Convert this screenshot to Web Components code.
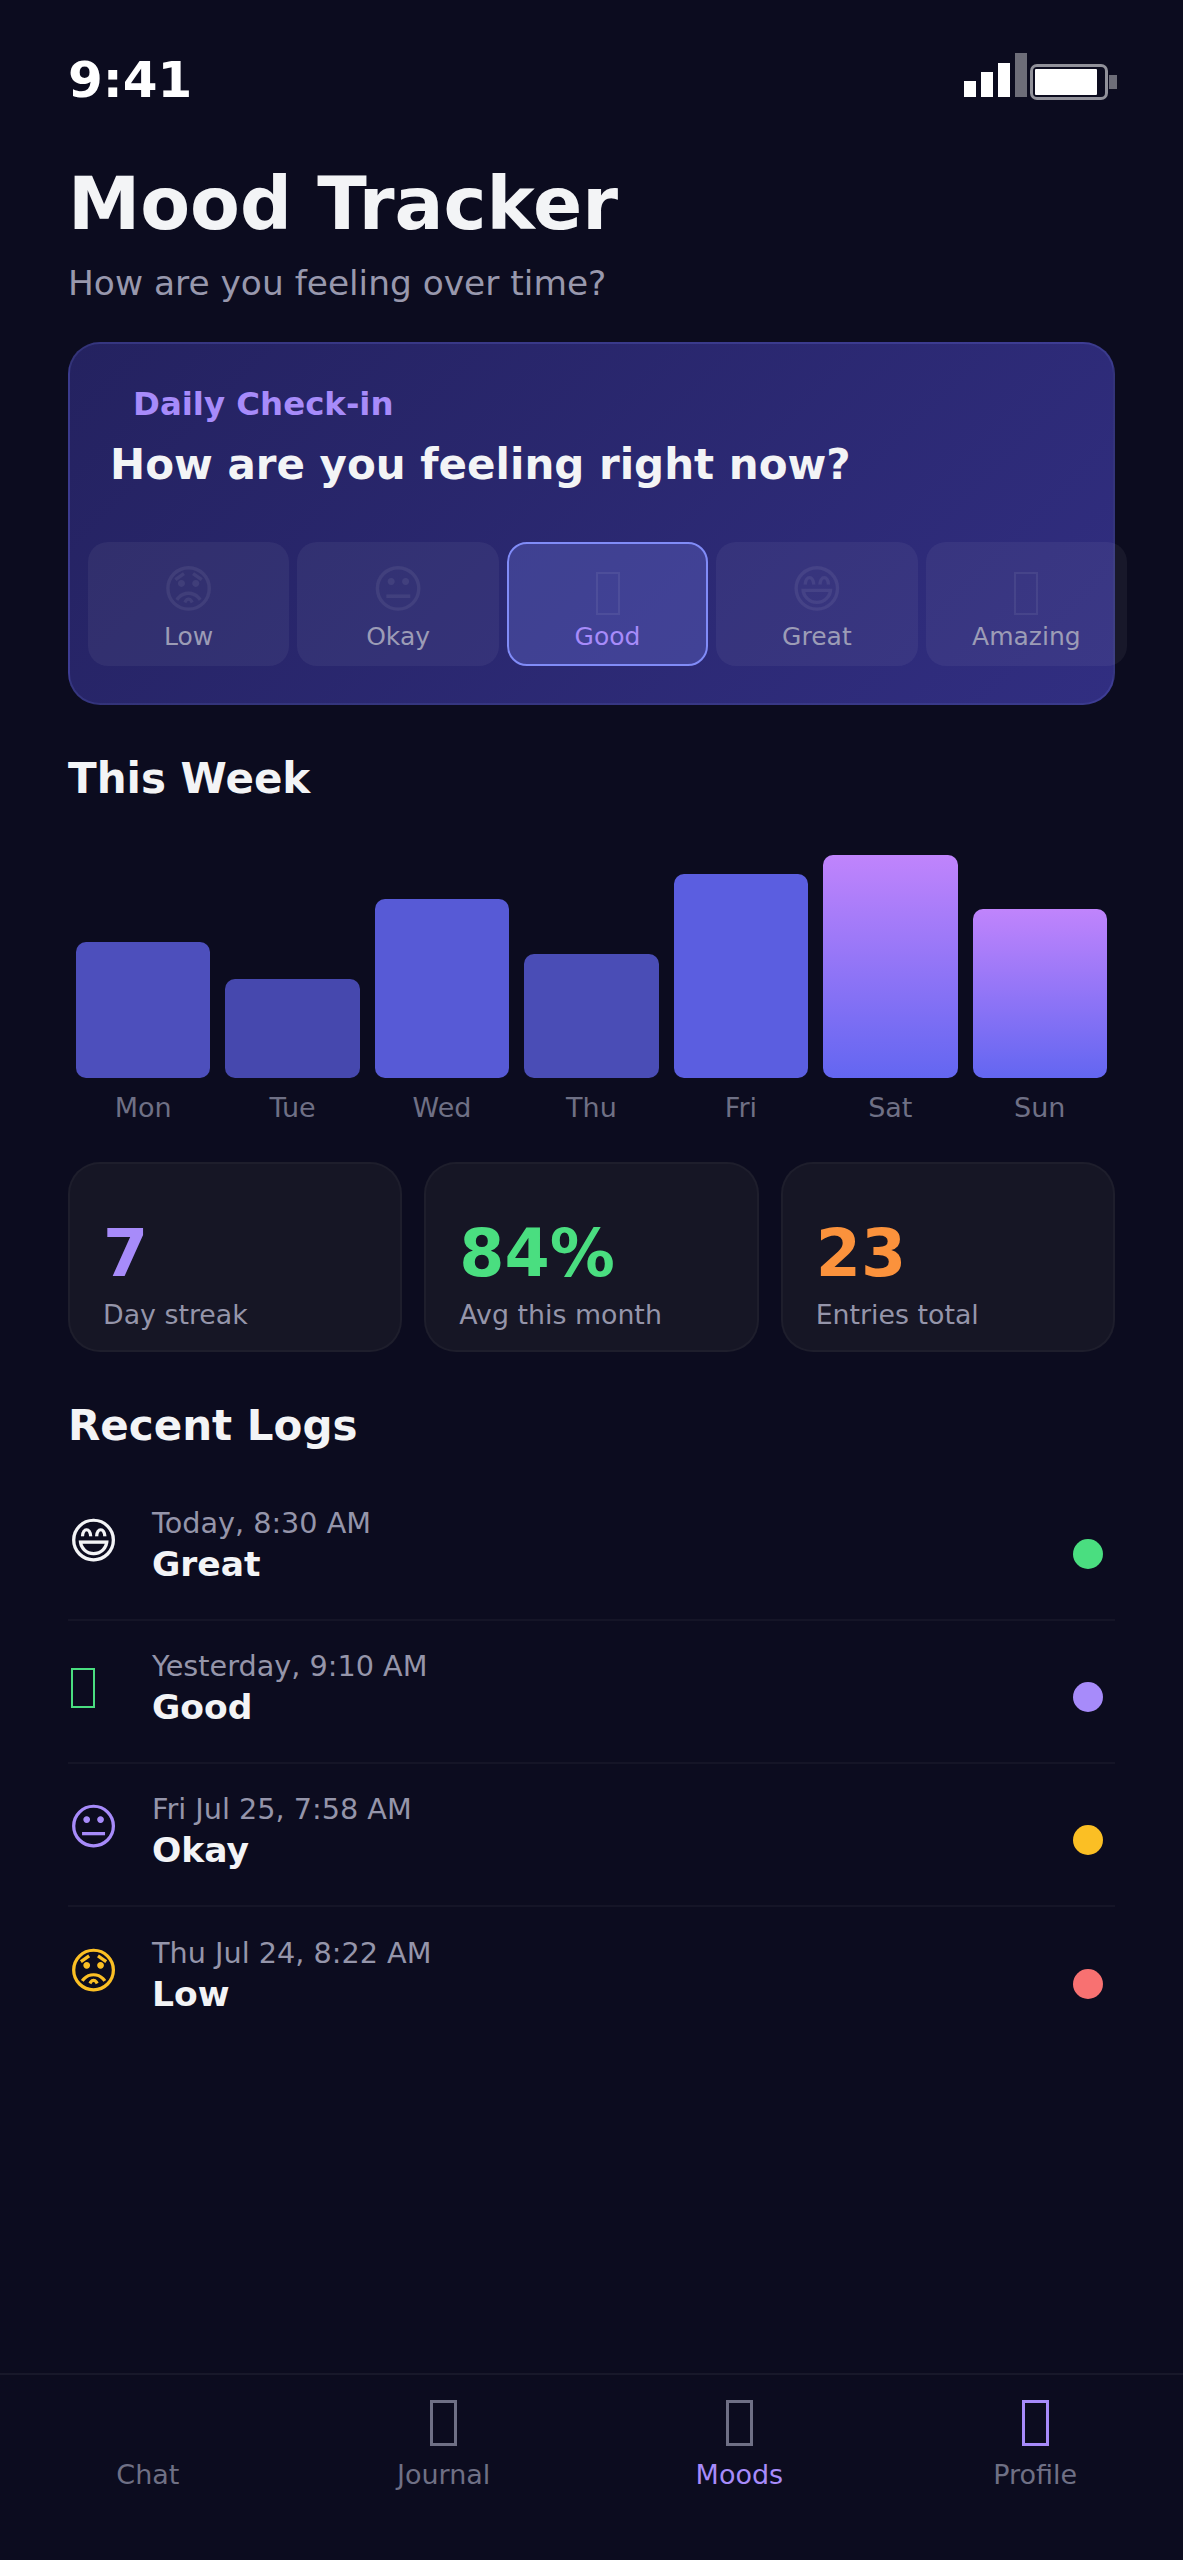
<!DOCTYPE html>
<html lang="en"><head><meta charset="utf-8"><title>Mood Tracker</title>
<style>
html,body{margin:0;padding:0;background:#0c0c1f;color:#f3f4f6;font-family:"DejaVu Sans",sans-serif}
</style></head><body>
<mood-app>
  <status-bar time="9:41"></status-bar>
  <page-header heading="Mood Tracker" sub="How are you feeling over time?"></page-header>
  <checkin-card eyebrow="Daily Check-in" question="How are you feeling right now?">
    <mood-option glyph="😟" label="Low"></mood-option>
    <mood-option glyph="😐" label="Okay"></mood-option>
    <mood-option box label="Good" selected></mood-option>
    <mood-option glyph="😄" label="Great"></mood-option>
    <mood-option box label="Amazing"></mood-option>
  </checkin-card>
  <section-title style="margin-top:47px">This Week</section-title>
  <week-chart>
    <chart-bar h="136" o=".75" label="Mon"></chart-bar>
    <chart-bar h="99" o=".68" label="Tue"></chart-bar>
    <chart-bar h="179" o=".87" label="Wed"></chart-bar>
    <chart-bar h="124" o=".72" label="Thu"></chart-bar>
    <chart-bar h="204" o=".92" label="Fri"></chart-bar>
    <chart-bar h="223" hot label="Sat"></chart-bar>
    <chart-bar h="169" hot label="Sun"></chart-bar>
  </week-chart>
  <stat-row>
    <stat-card value="7" color="#a78bfa" label="Day streak"></stat-card>
    <stat-card value="84%" color="#4ade80" label="Avg this month"></stat-card>
    <stat-card value="23" color="#fb923c" label="Entries total"></stat-card>
  </stat-row>
  <section-title style="margin-top:47px">Recent Logs</section-title>
  <log-list>
    <log-row glyph="😄" color="#f3f4f6" when="Today, 8:30 AM" mood="Great" dot="#4ade80"></log-row>
    <log-row box color="#4ade80" when="Yesterday, 9:10 AM" mood="Good" dot="#a78bfa"></log-row>
    <log-row glyph="😐" color="#a78bfa" when="Fri Jul 25, 7:58 AM" mood="Okay" dot="#fbbf24"></log-row>
    <log-row glyph="😟" color="#fbbf24" when="Thu Jul 24, 8:22 AM" mood="Low" dot="#f87171" last></log-row>
  </log-list>
  <bottom-nav>
    <nav-item label="Chat"></nav-item>
    <nav-item box label="Journal"></nav-item>
    <nav-item box label="Moods" active></nav-item>
    <nav-item box label="Profile" boxactive></nav-item>
  </bottom-nav>
</mood-app>
<script>
function reg(name, css, html){
  customElements.define(name, class extends HTMLElement{
    connectedCallback(){
      if(this.shadowRoot) return;
      const a=n=>{const v=this.getAttribute(n);return v===null?'':v};
      const r=this.attachShadow({mode:'open'});
      r.innerHTML='<style>'+css(this,a)+'</style>'+html(a,this);
    }
  });
}
reg('mood-app',()=>`:host{display:flex;flex-direction:column;min-height:2560px;box-sizing:border-box;padding:0 68px;background:#0c0c1f}`,()=>`<slot></slot>`);
reg('status-bar',()=>`:host{display:flex;justify-content:space-between;align-items:flex-start;height:151px;box-sizing:border-box;padding-top:50px}
.t{font-size:50px;font-weight:700;line-height:60px;color:#fff}
.s{display:flex;align-items:flex-end;gap:5px;margin-top:3px;margin-right:-2px;margin-left:auto}
.b{width:12px;background:#fff}.b.off{opacity:.4}
.bat{box-sizing:border-box;width:78px;height:36px;border:3px solid rgba(255,255,255,.55);border-radius:7px;padding:2px;margin-left:-2px;margin-bottom:-3px;display:flex}
.fill{width:62px;background:#fff;border-radius:1px}
.cap{width:8px;height:14px;background:rgba(255,255,255,.4);margin-left:-4px;margin-bottom:8px}`,
a=>`<div class="t">${a('time')}</div><div class="s"><div class="b" style="height:16px"></div><div class="b" style="height:25px"></div><div class="b" style="height:34px"></div><div class="b off" style="height:44px"></div><div class="bat"><div class="fill"></div></div><div class="cap"></div></div>`);
reg('page-header',()=>`:host{display:block}
h1{margin:0;font-size:72.6px;font-weight:700;line-height:90px;color:#f3f4f6;padding-top:8px}
p{margin:0;font-size:34.4px;line-height:54px;color:#9898ad;margin-top:7px}`,
a=>`<h1>${a('heading')}</h1><p>${a('sub')}</p>`);
reg('checkin-card',()=>`:host{display:block;box-sizing:border-box;height:363px;margin-top:32px;border:2px solid rgba(129,140,248,.16);border-radius:32px;background:linear-gradient(135deg,#242260,#312e81);padding-top:40px}
.e{font-size:32.4px;font-weight:700;line-height:40px;color:#a78bfa;margin-left:63px}
.q{font-size:42px;font-weight:700;line-height:54px;color:#f3f4f6;margin:14px 0 0 40px}
.m{display:flex;gap:8px;margin:50px 0 0 18px;width:1039px}`,
a=>`<div class="e">${a('eyebrow')}</div><div class="q">${a('question')}</div><div class="m"><slot></slot></div>`);
reg('mood-option',(h)=>{const s=h.hasAttribute('selected');return `:host{flex:1 1 0;min-width:0;box-sizing:border-box;height:124px;border-radius:20px;display:flex;flex-direction:column;align-items:center;background:${s?'rgba(129,140,248,.25)':'rgba(255,255,255,.05)'};border:2px solid ${s?'#818cf8':'transparent'}}
.g{height:60px;font-size:51px;line-height:60px;margin-top:16px;color:rgba(255,255,255,.07);display:flex;align-items:center}
.x{box-sizing:border-box;width:24px;height:43px;margin-top:6px;border:2px solid rgba(255,255,255,.07)}
.l{font-size:25px;line-height:30px;margin-top:2px;color:${s?'#a78bfa':'#9c9cb6'}}`},
(a,h)=>`<div class="g">${h.hasAttribute('box')?'<div class="x"></div>':a('glyph')}</div><div class="l">${a('label')}</div>`);
reg('section-title',()=>`:host{display:block;font-size:42px;font-weight:700;line-height:54px;color:#f3f4f6}`,()=>`<slot></slot>`);
reg('week-chart',()=>`:host{display:flex;align-items:flex-end;gap:15px;padding:0 8px;margin-top:49px}`,()=>`<slot></slot>`);
reg('chart-bar',(h,a)=>`:host{flex:1 1 0;min-width:0;display:flex;flex-direction:column;align-items:center}
.b{width:100%;height:${a('h')}px;border-radius:10px;background:${h.hasAttribute('hot')?'linear-gradient(180deg,#c084fc,#6366f1)':'#6366f1'};opacity:${a('o')||1}}
.l{font-size:27px;line-height:34px;margin-top:13px;color:#6f7085}`,
a=>`<div class="b"></div><div class="l">${a('label')}</div>`);
reg('stat-row',()=>`:host{display:flex;gap:22px;margin-top:37px}`,()=>`<slot></slot>`);
reg('stat-card',(h,a)=>`:host{flex:1 1 0;min-width:0;box-sizing:border-box;height:190px;background:#161625;border:2px solid rgba(255,255,255,.035);border-radius:32px;padding:51px 0 0 33px}
.v{font-size:65px;font-weight:700;line-height:78px;color:${a('color')}}
.l{font-size:26.8px;line-height:36px;color:#9595aa;margin-top:4px}`,
a=>`<div class="v">${a('value')}</div><div class="l">${a('label')}</div>`);
reg('log-list',()=>`:host{display:block;margin-top:25px}`,()=>`<slot></slot>`);
reg('log-row',(h,a)=>`:host{display:flex;align-items:center;height:143px;box-sizing:border-box;${h.hasAttribute('last')?'':'border-bottom:2px solid rgba(255,255,255,.04)'}}
.g{width:84px;flex:none;font-size:49px;line-height:60px;height:60px;color:${a('color')};margin-bottom:13px;display:flex;align-items:center}
.x{box-sizing:border-box;width:24px;height:40px;margin:6px 0 0 3px;border:2px solid ${a('color')}}
.c{flex:1;margin-bottom:8px}.w{font-size:28.7px;line-height:38px;color:#9595aa}.n{font-size:34.5px;font-weight:700;line-height:44px;color:#f3f4f6}
.d{width:30px;height:30px;border-radius:50%;background:${a('dot')};margin:10px 12px 0 0}`,
(a,h)=>`<div class="g">${h.hasAttribute('box')?'<div class="x"></div>':a('glyph')}</div><div class="c"><div class="w">${a('when')}</div><div class="n">${a('mood')}</div></div><div class="d"></div>`);
reg('bottom-nav',()=>`:host{display:flex;margin:auto -68px 0;height:187px;box-sizing:border-box;border-top:2px solid rgba(255,255,255,.05);background:#0c0c1f}`,()=>`<slot></slot>`);
reg('nav-item',(h)=>`:host{flex:1 1 0;display:flex;flex-direction:column;align-items:center;padding-top:25px;color:${h.hasAttribute('active')?'#a78bfa':'#6f7085'}}
.g{height:46px;display:flex}
.x{box-sizing:border-box;width:27px;height:46px;border:3px solid ${h.hasAttribute('boxactive')?'#a78bfa':'#6f7085'}}
.l{font-size:27px;line-height:34px;margin-top:12px}`,
(a,h)=>`<div class="g">${h.hasAttribute('box')?'<div class="x"></div>':''}</div><div class="l">${a('label')}</div>`);
</script>
</body></html>
